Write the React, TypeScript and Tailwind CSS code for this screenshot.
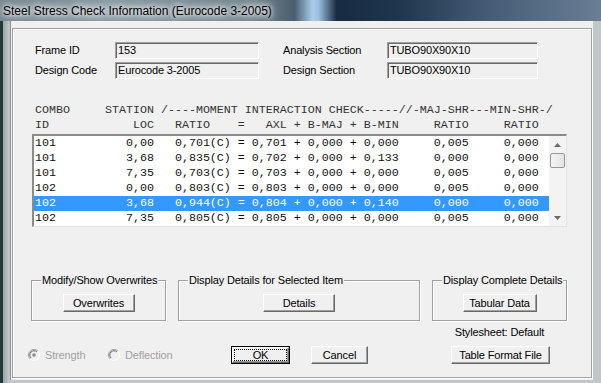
import type { ReactNode } from 'react';

// Dados das combinações (cada linha da lista)
const rows = [
  ['101', '0,00', '0,701(C)', '0,701', '0,000', '0,000', '0,005', '0,000'],
  ['101', '3,68', '0,835(C)', '0,702', '0,000', '0,133', '0,000', '0,000'],
  ['101', '7,35', '0,703(C)', '0,703', '0,000', '0,000', '0,005', '0,000'],
  ['102', '0,00', '0,803(C)', '0,803', '0,000', '0,000', '0,005', '0,000'],
  ['102', '3,68', '0,944(C)', '0,804', '0,000', '0,140', '0,000', '0,000'],
  ['102', '7,35', '0,805(C)', '0,805', '0,000', '0,000', '0,005', '0,000'],
];

const header1 = 'COMBO     STATION /----MOMENT INTERACTION CHECK-----//-MAJ-SHR---MIN-SHR-/';
const header2 = 'ID            LOC   RATIO    =   AXL + B-MAJ + B-MIN     RATIO     RATIO';

const formatRow = (r: string[]) =>
  `${r[0].padEnd(13)}${r[1].padStart(4)}   ${r[2]} = ${r[3]} + ${r[4]} + ${r[5]}     ${r[6]}     ${r[7]}`;

function WinButton({ children, className }: { children: ReactNode; className: string }) {
  return (
    <div
      className={`h-[18px] flex items-center justify-center bg-[#f0f0f0] border border-t-white border-l-white border-r-[#696969] border-b-[#696969] shadow-[inset_-1px_-1px_0_#a0a0a0] text-[11px] text-black ${className}`}
    >
      {children}
    </div>
  );
}

function Group({ title, className, children }: { title: string; className: string; children: ReactNode }) {
  return (
    <div
      className={`relative h-[41px] border border-[#a0a0a0] shadow-[inset_1px_1px_0_#fff,1px_1px_0_#fff] flex justify-center pt-[13px] ${className}`}
    >
      <span className="absolute left-[9px] -top-[7px] px-[1px] bg-[#f0f0f0] leading-[13px] text-[11px] text-black whitespace-nowrap">
        {title}
      </span>
      {children}
    </div>
  );
}

function TextBox({ value, className }: { value: string; className: string }) {
  return (
    <div
      className={`h-[17px] flex items-center pl-[2px] bg-[#f0f0f0] border border-t-[#a0a0a0] border-l-[#a0a0a0] border-r-white border-b-white shadow-[inset_1px_1px_0_#696969] text-[11px] text-black ${className}`}
    >
      {value}
    </div>
  );
}

function Radio({ checked }: { checked: boolean }) {
  return (
    <svg width="12" height="12" viewBox="0 0 12 12" className="shrink-0">
      <circle cx="6" cy="6" r="5" fill="#f0f0f0" />
      <path d="M9.9 2.1 A5.5 5.5 0 0 0 2.1 9.9" stroke="#a0a0a0" fill="none" />
      <path d="M2.1 9.9 A5.5 5.5 0 0 0 9.9 2.1" stroke="#ffffff" fill="none" />
      <path d="M9 3 A4.2 4.2 0 0 0 3 9" stroke="#696969" fill="none" />
      {checked && <circle cx="6" cy="6" r="1.8" fill="#8c8c8c" />}
    </svg>
  );
}

export default function App() {
  return (
    <div className="w-[601px] h-[383px] overflow-hidden flex flex-col bg-[#c2c6c9] font-['Liberation_Sans',Arial,sans-serif] tracking-[-0.15px]">
      {/* Barra de título */}
      <div className="h-[21px] shrink-0 flex items-center pl-[3px] bg-[linear-gradient(to_right,#75878f_0%,#8a9ba3_18%,#74868e_42%,#4a5e6e_49%,#a9cde9_52%,#9cc0de_53%,#182c42_56%,#1e354d_66%,#465e78_82%,#6a7e94_100%)]">
        <span className="text-[12px] text-black leading-[14px] tracking-normal [text-shadow:0_0_4px_#fff,0_0_8px_#fff,0_0_10px_#eef]">
          Steel Stress Check Information (Eurocode 3-2005)
        </span>
      </div>

      <div className="flex flex-1">
        {/* Borda esquerda */}
        <div className="w-[10px] bg-[linear-gradient(to_right,#1d3a38_0,#1d3a38_3px,#9aa5aa_3px,#c6cbce_10px)]" />

        {/* Área do cliente */}
        <div className="w-[583px] h-[359px] bg-[#f0f0f0] border-l border-[#8a8f94] flex flex-col">
          <div className="ml-[1px] mt-[7px] w-[580px] h-[350px] border border-[#a0a0a0] shadow-[inset_1px_1px_0_#fff,1px_1px_0_#fff] flex flex-col">
            {/* Campos */}
            <div className="mt-[13px] ml-[22px] flex flex-col gap-[3px]">
              <div className="flex items-center">
                <span className="w-[80px] text-[11px] text-black">Frame ID</span>
                <TextBox value="153" className="w-[144px]" />
                <span className="ml-[24px] w-[104px] text-[11px] text-black">Analysis Section</span>
                <TextBox value="TUBO90X90X10" className="w-[151px]" />
              </div>
              <div className="flex items-center">
                <span className="w-[80px] text-[11px] text-black">Design Code</span>
                <TextBox value="Eurocode 3-2005" className="w-[144px]" />
                <span className="ml-[24px] w-[104px] text-[11px] text-black">Design Section</span>
                <TextBox value="TUBO90X90X10" className="w-[151px]" />
              </div>
            </div>

            {/* Cabeçalho da tabela */}
            <div className="mt-[24px] ml-[22px] font-['Liberation_Mono','Courier_New',monospace] tracking-normal text-[11.67px] leading-[15px] text-[#333] whitespace-pre">
              <div>{header1}</div>
              <div>{header2}</div>
            </div>

            {/* Lista */}
            <div className="mt-[1px] ml-[19px] w-[535px] h-[93px] flex bg-white border-t-2 border-l-2 border-r border-b border-t-[#8c8c8c] border-l-[#8c8c8c] border-r-[#e3e3e3] border-b-[#e3e3e3]">
              <div className="w-[515px] font-['Liberation_Mono','Courier_New',monospace] tracking-normal text-[11.67px] leading-[15px] whitespace-pre">
                {rows.map((r, i) => (
                  <div
                    key={i}
                    className={i === 4 ? 'h-[15px] pl-[1px] bg-[#3399ff] text-white' : 'h-[15px] pl-[1px] text-[#111]'}
                  >
                    {formatRow(r)}
                  </div>
                ))}
              </div>
              {/* Barra de rolagem */}
              <div className="w-[17px] flex flex-col bg-[#f3f3f3]">
                <div className="h-[17px] flex items-center justify-center">
                  <svg width="7" height="4" viewBox="0 0 7 4">
                    <path d="M3.5 0 L7 4 L0 4 Z" fill="#6a6a6a" />
                  </svg>
                </div>
                <div className="mx-[1px] h-[15px] rounded-[2px] border border-[#979797] bg-[linear-gradient(to_right,#f4f4f4,#e4e4e4)]" />
                <div className="flex-1" />
                <div className="h-[17px] flex items-center justify-center">
                  <svg width="7" height="4" viewBox="0 0 7 4">
                    <path d="M0 0 L7 0 L3.5 4 Z" fill="#6a6a6a" />
                  </svg>
                </div>
              </div>
            </div>

            {/* Grupos de ações */}
            <div className="mt-[53px] ml-[18px] flex gap-[12px]">
              <Group title="Modify/Show Overwrites" className="w-[135px]">
                <WinButton className="w-[72px]">Overwrites</WinButton>
              </Group>
              <Group title="Display Details for Selected Item" className="w-[242px]">
                <WinButton className="w-[72px]">Details</WinButton>
              </Group>
              <Group title="Display Complete Details" className="w-[135px]">
                <WinButton className="w-[74px]">Tabular Data</WinButton>
              </Group>
            </div>

            <div className="mt-[4px] ml-[419px] w-[135px] text-center text-[11px] leading-[14px] text-black">
              Stylesheet: Default
            </div>

            {/* Linha inferior */}
            <div className="mt-[7px] ml-[15px] flex items-center">
              <div className="w-[80px] flex items-center gap-[5px]">
                <Radio checked />
                <span className="text-[11px] text-[#a0a0a0]">Strength</span>
              </div>
              <div className="w-[123px] flex items-center gap-[5px]">
                <Radio checked={false} />
                <span className="text-[11px] text-[#a0a0a0]">Deflection</span>
              </div>
              <div className="w-[59px] h-[18px] border border-black flex">
                <div className="flex-1 p-[1px] bg-[#f0f0f0] border border-t-white border-l-white border-r-[#696969] border-b-[#696969] shadow-[inset_-1px_-1px_0_#a0a0a0] flex">
                  <div className="flex-1 border border-dotted border-black flex items-center justify-center text-[11px] leading-[11px] text-black">
                    OK
                  </div>
                </div>
              </div>
              <WinButton className="ml-[21px] w-[57px]">Cancel</WinButton>
              <WinButton className="ml-[83px] w-[99px]">Table Format File</WinButton>
            </div>
          </div>
        </div>

        {/* Borda direita */}
        <div className="w-[8px] bg-[#c2c6c9]" />
      </div>
    </div>
  );
}
